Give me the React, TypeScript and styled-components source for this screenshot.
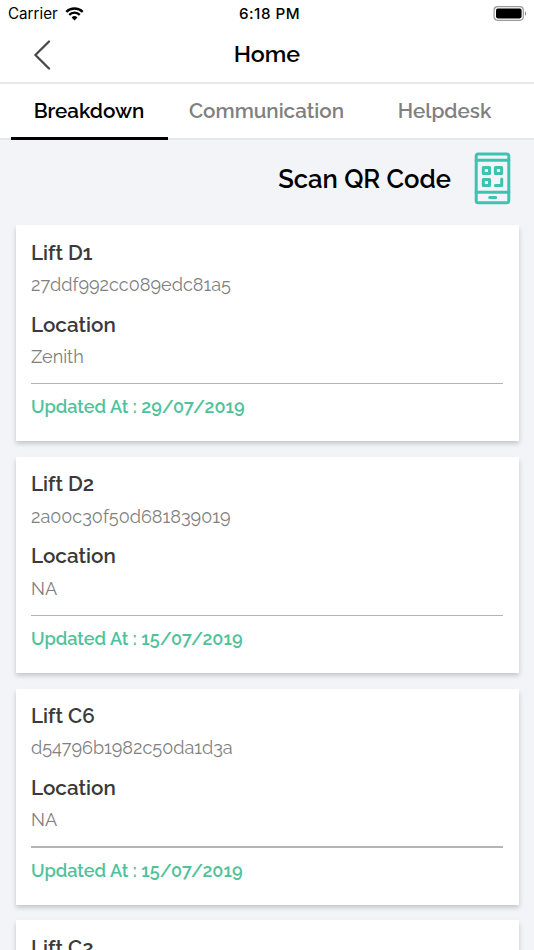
import React from "react";
import styled, { createGlobalStyle } from "styled-components";

const GlobalStyle = createGlobalStyle`
  *, *::before, *::after { box-sizing: border-box; }
  html, body { margin: 0; padding: 0; background: #f2f4f8; }
  body { font-family: Raleway, Lato, "Open Sans", sans-serif; }
`;

const Screen = styled.div`
  width: 100%;
  height: 950px;
  display: flex;
  flex-direction: column;
  overflow: hidden;
  background: #f2f4f8;
`;

const StatusBar = styled.div`
  flex: none;
  height: 27px;
  padding: 0 7px 0 8px;
  display: grid;
  grid-template-columns: 1fr auto 1fr;
  align-items: center;
  background: #fff;
  color: #000;
  font-family: Inter, "Liberation Sans", sans-serif;
  font-size: 15.2px;
  line-height: 27px;
`;

const Carrier = styled.div`
  display: flex;
  align-items: center;
  gap: 7px;
`;

const Clock = styled.div`
  font-weight: 550;
  letter-spacing: 0.5px;
  padding-left: 4px;
`;

const Battery = styled.div`
  display: flex;
  justify-content: flex-end;
`;

const Header = styled.header`
  flex: none;
  height: 57px;
  display: grid;
  grid-template-columns: 84px 1fr 84px;
  align-items: center;
  background: #fff;
  border-bottom: 2px solid #e8e8e9;
`;

const BackButton = styled.button`
  border: 0;
  padding: 0 0 0 33px;
  background: none;
  display: flex;
  align-items: center;
`;

const Title = styled.h1`
  margin: 0;
  padding-bottom: 2px;
  text-align: center;
  font-size: 23.22px;
  line-height: 27px;
  font-weight: 560;
  color: #000;
`;

const Tabs = styled.nav`
  flex: none;
  height: 56px;
  padding: 0 10.5px;
  display: flex;
  background: #fff;
  border-bottom: 2px solid #e6e7e9;
`;

const Tab = styled.button<{ $active?: boolean; $width: number }>`
  width: ${(p) => p.$width}px;
  height: 56px;
  flex: none;
  padding: 1.5px 0 0;
  border: 0;
  border-bottom: 3.5px solid ${(p) => (p.$active ? "#000" : "transparent")};
  background: none;
  font-family: inherit;
  font-size: 20.64px;
  font-weight: 560;
  color: ${(p) => (p.$active ? "#000" : "#808080")};
`;

const ScanRow = styled.div`
  flex: none;
  height: 85px;
  padding: 12px 23px 0 0;
  display: flex;
  justify-content: flex-end;
  align-items: flex-start;
  gap: 23px;
`;

const ScanLabel = styled.span`
  font-size: 25.6px;
  line-height: 30px;
  padding-top: 12px;
  font-weight: 560;
  color: #000;
`;

const CardList = styled.main`
  display: flex;
  flex-direction: column;
  gap: 15.5px;
  padding: 0 15.5px;
`;

const Card = styled.article`
  flex: none;
  height: 216.25px;
  padding: 15.7px 15.5px;
  background: #fff;
  box-shadow: 0 2.5px 5px rgba(0, 0, 0, 0.2);
`;

const CardHeading = styled.h2`
  margin: 0 0 8px;
  font-size: 20.64px;
  line-height: 24.25px;
  font-weight: 560;
  color: #3a3a3a;
`;

const CardValue = styled.p<{ $gap: number }>`
  margin: 0 0 ${(p) => p.$gap}px;
  font-size: 18.06px;
  line-height: 24px;
  font-weight: 380;
  color: #808080;
`;

const Divider = styled.hr`
  margin: 0;
  border: 0;
  height: 1.5px;
  background: #b4b4b4;
`;

const Updated = styled.p`
  margin: 11px 0 0;
  font-size: 18.06px;
  line-height: 24px;
  font-weight: 560;
  color: #4fc29a;
`;

const WifiIcon = () => (
  <svg width="19" height="14" viewBox="0 0 19 14" fill="none" stroke="#000" strokeWidth="2.3">
    <path d="M1.3 4.9A11.6 11.6 0 0 1 17.7 4.9" />
    <path d="M4.2 7.9A7.4 7.4 0 0 1 14.8 7.9" />
    <path d="M9.5 13.4L6.6 10.5A4.1 4.1 0 0 1 12.4 10.5Z" fill="#000" stroke="none" />
  </svg>
);

const BatteryIcon = () => (
  <svg width="34" height="15" viewBox="0 0 34 15" fill="none">
    <rect x="1.1" y="0.7" width="29.2" height="13.6" rx="3.5" stroke="#999" strokeWidth="1.2" />
    <rect x="3" y="2.6" width="25.6" height="9.8" rx="1.8" fill="#000" />
    <path d="M32 5.2C33.5 6 33.5 9 32 9.8Z" fill="#888" />
  </svg>
);

const BackIcon = () => (
  <svg width="18" height="30" viewBox="0 0 18 30" fill="none">
    <path d="M16 1.5L2.4 15L16 28.5" stroke="#484848" strokeWidth="2.3" strokeLinecap="round" strokeLinejoin="round" />
  </svg>
);

const QrPhoneIcon = () => (
  <svg width="37" height="53" viewBox="0 0 37 53" fill="none" stroke="#3dc4b1" strokeWidth="3" strokeLinecap="round" strokeLinejoin="round">
    <rect x="2.2" y="2" width="32.6" height="48.8" rx="2" />
    <path d="M2.2 8.2H34.8M2.2 40.2H34.8M15.7 45.6H21.7" />
    <rect x="9.3" y="15.5" width="6.2" height="6" />
    <rect x="21.4" y="15.5" width="6.2" height="6" />
    <rect x="9.3" y="27.4" width="6.2" height="6" />
    <path d="M27.7 27.1V33.5H21.4" />
  </svg>
);

const lifts = [
  { name: "Lift D1", id: "27ddf992cc089edc81a5", location: "Zenith", updated: "29/07/2019" },
  { name: "Lift D2", id: "2a00c30f50d681839019", location: "NA", updated: "15/07/2019" },
  { name: "Lift C6", id: "d54796b1982c50da1d3a", location: "NA", updated: "15/07/2019" },
  { name: "Lift C2", id: "", location: "", updated: "" },
];

export default function App() {
  return (
    <Screen>
      <GlobalStyle />
      <StatusBar>
        <Carrier>
          Carrier
          <WifiIcon />
        </Carrier>
        <Clock>6:18 PM</Clock>
        <Battery>
          <BatteryIcon />
        </Battery>
      </StatusBar>
      <Header>
        <BackButton aria-label="Back">
          <BackIcon />
        </BackButton>
        <Title>Home</Title>
      </Header>
      <Tabs>
        <Tab $width={157} $active>Breakdown</Tab>
        <Tab $width={198}>Communication</Tab>
        <Tab $width={158}>Helpdesk</Tab>
      </Tabs>
      <ScanRow>
        <ScanLabel>Scan QR Code</ScanLabel>
        <QrPhoneIcon />
      </ScanRow>
      <CardList>
        {lifts.map((lift) => (
          <Card key={lift.name}>
            <CardHeading>{lift.name}</CardHeading>
            {lift.id && (
              <>
                <CardValue $gap={15.75}>{lift.id}</CardValue>
                <CardHeading>Location</CardHeading>
                <CardValue $gap={14}>{lift.location}</CardValue>
                <Divider />
                <Updated>Updated At : {lift.updated}</Updated>
              </>
            )}
          </Card>
        ))}
      </CardList>
    </Screen>
  );
}
